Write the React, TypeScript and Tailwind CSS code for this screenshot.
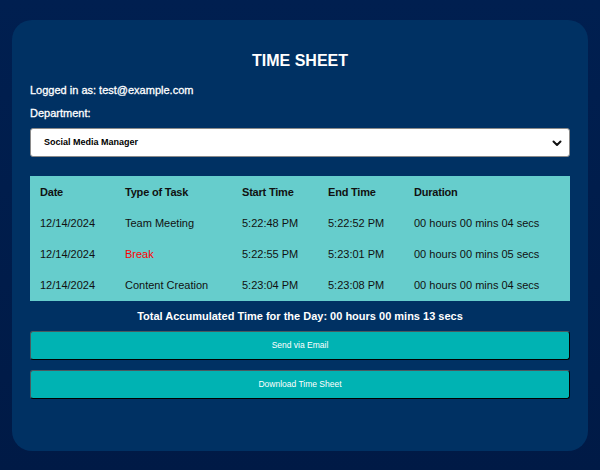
import React from "react";

const rows = [
  { date: "12/14/2024", task: "Team Meeting", start: "5:22:48 PM", end: "5:22:52 PM", dur: "00 hours 00 mins 04 secs" },
  { date: "12/14/2024", task: "Break", start: "5:22:55 PM", end: "5:23:01 PM", dur: "00 hours 00 mins 05 secs" },
  { date: "12/14/2024", task: "Content Creation", start: "5:23:04 PM", end: "5:23:08 PM", dur: "00 hours 00 mins 04 secs" },
];

const App: React.FC = () => {
  return (
    <div
      className="w-[600px] h-[470px] bg-gradient-to-b from-[#001f50] to-[#001a46] px-[12px] pt-[20px] text-white"
      style={{ fontFamily: '"Liberation Sans", Arial, sans-serif' }}
    >
      <div className="h-[431px] rounded-[20px] bg-[#003163] px-[18px] pt-[32px]">
        <h1 className="text-center text-[16px] leading-[18px] font-bold">TIME SHEET</h1>

        <p className="mt-[13px] text-[11px] leading-[14px] [-webkit-text-stroke:0.3px_white]">Logged in as: test@example.com</p>
        <p className="mt-[9px] text-[11px] leading-[14px] [-webkit-text-stroke:0.3px_white]">Department:</p>

        {/* Department select */}
        <div className="mt-[8px] h-[29px] flex items-center justify-between rounded-[3px] border border-[#8a8a8a] bg-white pl-[13px] pr-[6px] text-black">
          <span className="text-[9px] font-bold">Social Media Manager</span>
          <svg width="12" height="12" viewBox="0 0 24 24" fill="none" stroke="#111" strokeWidth="4" strokeLinecap="round" strokeLinejoin="round">
            <path d="M5 9l7 7 7-7" />
          </svg>
        </div>

        {/* Table */}
        <div className="mt-[19px] bg-[#66cdcc] pt-[1px] text-[11px] text-[#111]">
          <div className="h-[31px] grid grid-cols-[85px_117px_86px_86px_1fr] items-center pl-[10px] font-bold tracking-[-0.2px]">
            <span>Date</span>
            <span>Type of Task</span>
            <span>Start Time</span>
            <span>End Time</span>
            <span>Duration</span>
          </div>
          {rows.map((r) => (
            <div key={r.start} className="h-[31px] grid grid-cols-[85px_117px_86px_86px_1fr] items-center pl-[10px]">
              <span>{r.date}</span>
              <span className={r.task === "Break" ? "text-[#ff0000]" : ""}>{r.task}</span>
              <span>{r.start}</span>
              <span>{r.end}</span>
              <span>{r.dur}</span>
            </div>
          ))}
        </div>

        <p className="mt-[8px] text-center text-[11px] leading-[14px] font-bold">
          Total Accumulated Time for the Day: 00 hours 00 mins 13 secs
        </p>

        <button className="mt-[8px] w-full h-[29px] rounded-[3px] border border-[#4a5a60] border-b-black border-r-black bg-[#00b3b3] text-[8.5px] text-white">
          Send via Email
        </button>
        <button className="mt-[10px] w-full h-[29px] rounded-[3px] border border-[#4a5a60] border-b-black border-r-black bg-[#00b3b3] text-[8.5px] text-white">
          Download Time Sheet
        </button>
      </div>
    </div>
  );
};

export default App;
